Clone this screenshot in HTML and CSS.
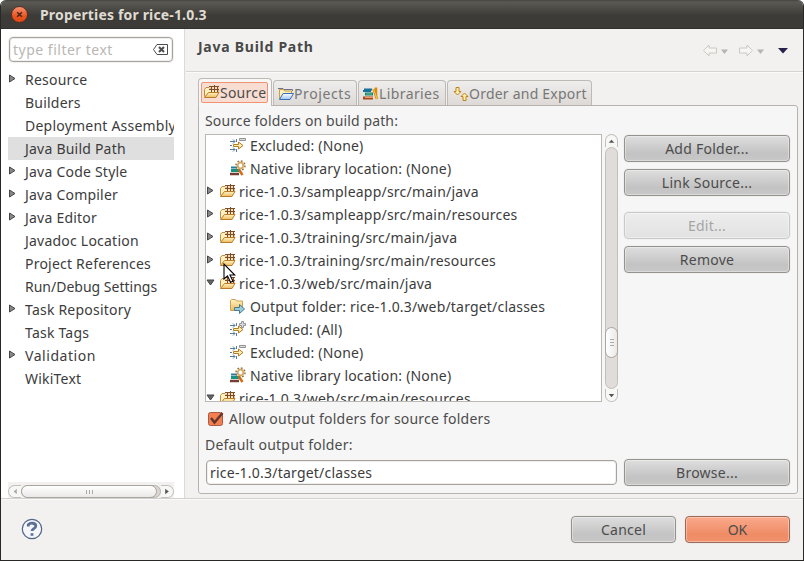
FILE: index.html
```html
<!DOCTYPE html>
<html lang="en">
<head>
<meta charset="utf-8">
<title>Properties for rice-1.0.3</title>
<link rel="stylesheet" href="styles.css">
</head>
<body>
<svg class="defs" width="0" height="0" aria-hidden="true">
  <defs>
    <linearGradient id="gold" x1="0" y1="0" x2="0" y2="1"><stop offset="0" stop-color="#fff3c4"/><stop offset="1" stop-color="#eebb5c"/></linearGradient>
    <linearGradient id="blue" x1="0" y1="0" x2="0" y2="1"><stop offset="0" stop-color="#fff"/><stop offset="1" stop-color="#9cc6f4"/></linearGradient>
  </defs>
  <symbol id="package" viewBox="0 0 16 16">
    <path d="M.5 12.500V5.500L2 3.500h3l1 1h8v4" fill="#fff0bd" stroke="#c08c42"/>
    <path d="M6.500 2.500h7v5h-7z" fill="#f6dfb8"/>
    <path d="M5 2.500h10M5 5.500h10M7.500 2v6M10.500 1v7M13.500 2v6" fill="none" stroke="#7d4d2a"/>
    <path d="M.5 13.500 4.500 8.500h10.500l-3 5z" fill="url(#gold)" stroke="#b87d2c"/>
  </symbol>
  <symbol id="project" viewBox="0 0 16 16">
    <path d="M1.500 13V3.500h4l1 1.500h7v3" fill="#fff0bd" stroke="#c8a040"/>
    <path d="M0 2.500h5l1 1h8.500V5" fill="none" stroke="#6f7189"/>
    <path d="M1.500 13.500 5 7.500h10.500l-3.500 6z" fill="url(#blue)" stroke="#3c6eb4"/>
  </symbol>
  <symbol id="library" viewBox="0 0 16 16">
    <path d="M1 3.500h8M0 5h8" stroke="#16709c" stroke-width="2"/>
    <path d="M2 8h8" stroke="#188268" stroke-width="3"/><path d="M3 8h6" stroke="#67c09d"/>
    <path d="M0 12h10" stroke="#a9451e" stroke-width="3"/><path d="M2 11.500h8" stroke="#e6a05f"/>
    <path d="m10.500 3 3.500 10M13 1.500V10" stroke="#da8a08" stroke-width="2.500"/><path d="m10.500 3 3.500 10" stroke="#ffc755"/>
  </symbol>
  <symbol id="order" viewBox="0 0 16 16">
    <path d="M3 1.500h3v4h2L4.500 9 1 5.500h2z" fill="#fff1ad" stroke="#bd821b"/>
    <path d="M10 14.500h3v-4h2L11.500 7 8 10.500h2z" fill="#fff1ad" stroke="#bd821b"/>
  </symbol>
  <symbol id="output" viewBox="0 0 16 16">
    <path d="M.5 12.500v-10l1-1h4l1 1.500h6v9z" fill="url(#gold)" stroke="#d0a14f"/>
    <path d="M4.500 9.500h5v-3l5 4.500-5 4.500v-3h-5z" fill="#9dcbd5" stroke="#477b94"/>
  </symbol>
  <symbol id="filter" viewBox="0 0 16 16">
    <path d="M0 4.500h5M3 2.500l2 2-2 2M0 8.500h2M0 12.500h5M3 10.500l2 2-2 2M6.500 2v3M6.500 12v3" fill="none" stroke="#5a7c9b"/>
    <path d="M3.500 7.500h5V5l4.500 3.500L8.500 12V9.500h-5z" fill="#fff0b1" stroke="#b57b24"/>
  </symbol>
  <symbol id="included" viewBox="0 0 16 16">
    <use href="#filter"/><path d="M9.500 2.500h2v-2h2v2h2v2h-2v2h-2v-2h-2z" fill="#ddd" stroke="#929292"/>
  </symbol>
  <symbol id="excluded" viewBox="0 0 16 16">
    <use href="#filter"/><path d="M9.500 1.500h6v2h-6z" fill="#ddd" stroke="#929292"/>
  </symbol>
  <symbol id="native" viewBox="0 0 16 16">
    <path d="M1 7.500h6" stroke="#247d9b" stroke-width="2"/><path d="M1 10.500h8" stroke="#1a9080" stroke-width="3"/><path d="M0 14h9" stroke="#773d32" stroke-width="2.500"/>
    <path d="m8.500 9 4 6" stroke="#d76b15" stroke-width="2.500"/>
    <circle cx="10.500" cy="5.500" r="4.500" fill="none" stroke="#96733e" stroke-width="1.500" stroke-dasharray="1.800 1.700"/>
    <circle cx="10.500" cy="5.500" r="2.800" fill="#fff" stroke="#d3ab69" stroke-width="1.800"/>
  </symbol>
  <symbol id="closed" viewBox="0 0 7 9"><path d="M.5 1v7L6 4.500z" fill="#888" stroke="#444"/></symbol>
  <symbol id="open" viewBox="0 0 9 7"><path d="M1 1h7L4.500 6z" fill="#666" stroke="#444"/></symbol>
</svg>
<div class="window">
  <header class="titlebar">
    <span class="close"><svg viewBox="0 0 16 16"><path d="m5.500 5.500 5 5m0-5-5 5" stroke="#43221a" stroke-width="1.500"/></svg></span>
    <h1>Properties for rice-1.0.3</h1>
  </header>
  <div class="content">
    <aside class="sidebar">
      <div class="search"><span>type filter text</span>
        <svg width="15" height="11" viewBox="0 0 15 11"><path d="M4 .5h10.500v10H4L.5 5.500z" fill="#fff" stroke="#4d4d4d"/><path d="m6 3 5 5m0-5L6 8" stroke="#4d4d4d" stroke-width="2"/></svg>
      </div>
      <ul class="nav">
        <li><svg class="tw"><use href="#closed"/></svg><span>Resource</span></li>
        <li><span>Builders</span></li>
        <li><span>Deployment Assembly</span></li>
        <li class="selected"><span>Java Build Path</span></li>
        <li><svg class="tw"><use href="#closed"/></svg><span>Java Code Style</span></li>
        <li><svg class="tw"><use href="#closed"/></svg><span>Java Compiler</span></li>
        <li><svg class="tw"><use href="#closed"/></svg><span>Java Editor</span></li>
        <li><span>Javadoc Location</span></li>
        <li><span>Project References</span></li>
        <li class="tight"><span>Run/Debug Settings</span></li>
        <li><svg class="tw"><use href="#closed"/></svg><span>Task Repository</span></li>
        <li><span>Task Tags</span></li>
        <li class="loose"><svg class="tw"><use href="#closed"/></svg><span>Validation</span></li>
        <li><span>WikiText</span></li>
      </ul>
      <div class="hscroll">
        <svg class="step" viewBox="0 0 12 12"><path d="M8 3v6L4.500 6z" fill="#aaa"/></svg>
        <div class="htrough"><div class="hthumb"><i></i><i></i><i></i></div></div>
        <svg class="step" viewBox="0 0 12 12"><path d="M4 3v6l4-3z" fill="#555"/></svg>
      </div>
    </aside>
    <main class="page">
      <div class="pagehead">
        <h2>Java Build Path</h2>
        <svg class="history" width="88" height="14" viewBox="0 0 88 14">
          <path d="M.5 6.500 6 1v3h7.500v5H6v3z" fill="#f6f6f2" stroke="#c9c8c4"/><path d="M18 5.500h7L21.500 10z" fill="#b5b4b0"/>
          <path d="M49.500 6.500 44 1v3h-7.500v5H44v3z" fill="#f6f6f2" stroke="#c9c8c4"/><path d="M54 5.500h7L57.500 10z" fill="#b5b4b0"/>
          <path d="M75 4h10l-5 5.500z" fill="#252147"/>
        </svg>
      </div>
      <div class="tabs">
        <div class="tab active"><div class="focus"><svg class="ic"><use href="#package"/></svg><span>Source</span></div></div>
        <div class="tab projects"><svg class="ic"><use href="#project"/></svg><span>Projects</span></div>
        <div class="tab libraries"><svg class="ic"><use href="#library"/></svg><span>Libraries</span></div>
        <div class="tab export"><svg class="ic"><use href="#order"/></svg><span>Order and Export</span></div>
      </div>
      <section class="panel">
        <label class="caption">Source folders on build path:</label>
        <div class="columns">
          <ul class="tree">
            <li class="child"><svg class="ic"><use href="#excluded"/></svg><span>Excluded: (None)</span></li>
            <li class="child"><svg class="ic"><use href="#native"/></svg><span>Native library location: (None)</span></li>
            <li><svg class="tw"><use href="#closed"/></svg><svg class="ic"><use href="#package"/></svg><span>rice-1.0.3/sampleapp/src/main/java</span></li>
            <li><svg class="tw"><use href="#closed"/></svg><svg class="ic"><use href="#package"/></svg><span>rice-1.0.3/sampleapp/src/main/resources</span></li>
            <li><svg class="tw"><use href="#closed"/></svg><svg class="ic"><use href="#package"/></svg><span>rice-1.0.3/training/src/main/java</span></li>
            <li><svg class="tw"><use href="#closed"/></svg><svg class="ic"><use href="#package"/></svg><span>rice-1.0.3/training/src/main/resources</span></li>
            <li><svg class="tw"><use href="#open"/></svg><svg class="ic"><use href="#package"/></svg><span>rice-1.0.3/web/src/main/java</span></li>
            <li class="child"><svg class="ic"><use href="#output"/></svg><span>Output folder: rice-1.0.3/web/target/classes</span></li>
            <li class="child"><svg class="ic"><use href="#included"/></svg><span>Included: (All)</span></li>
            <li class="child"><svg class="ic"><use href="#excluded"/></svg><span>Excluded: (None)</span></li>
            <li class="child"><svg class="ic"><use href="#native"/></svg><span>Native library location: (None)</span></li>
            <li><svg class="tw"><use href="#open"/></svg><svg class="ic"><use href="#package"/></svg><span>rice-1.0.3/web/src/main/resources</span></li>
          </ul>
          <div class="vscroll">
            <svg class="step" viewBox="0 0 12 12"><path d="M3 8h6L6 4.500z" fill="#555"/></svg>
            <div class="vtrough"><div class="vthumb"><i></i><i></i><i></i></div></div>
            <svg class="step" viewBox="0 0 12 12"><path d="M3 5h6L6 8.500z" fill="#555"/></svg>
          </div>
          <div class="actions">
            <button>Add Folder...</button>
            <button>Link Source...</button>
            <button class="gap" disabled>Edit...</button>
            <button>Remove</button>
          </div>
        </div>
        <label class="check"><svg width="17" height="17" viewBox="0 0 17 17"><rect x="1.500" y="2.500" width="14" height="13" rx="2" fill="#f47e50" stroke="#a85b41"/><path d="m4 8 3.500 4.500L15.500 3" fill="none" stroke="#65362b" stroke-width="2.500"/></svg><span>Allow output folders for source folders</span></label>
        <label class="caption deflabel">Default output folder:</label>
        <div class="outrow"><div class="field">rice-1.0.3/target/classes</div><button>Browse...</button></div>
      </section>
    </main>
  </div>
  <footer>
    <svg class="help" width="22" height="22" viewBox="0 0 22 22"><circle cx="11" cy="11" r="9.700" fill="#f4f6fa" stroke="#52658a" stroke-width="1.200"/><path d="M7.300 8.500V6.700c2-2.300 7.500-2 7.500 1.300 0 2.700-3.800 2.500-3.800 5M11 15.300v2.500" fill="none" stroke="#5b6f96" stroke-width="2.800"/></svg>
    <button>Cancel</button><button class="primary">OK</button>
  </footer>
  <svg class="cursor" width="13" height="21" viewBox="0 0 13 21"><path d="M1 1v15l3.500-3.200 3 6.500 2.500-1.100-3-6.200h4.800z" fill="#fff" stroke="#000" stroke-width="1.100"/></svg>
</div>
</body>
</html>
```
FILE: styles.css
```css
* { box-sizing: border-box; }
body { margin: 0; background: #fff; color: #3c3c3c; font: 14px/23px "Noto Sans", sans-serif; letter-spacing: .22px; }
h1, h2, ul { margin: 0; padding: 0; }
ul { list-style: none; }
svg { flex: none; display: block; }
.defs { position: absolute; }
span, label, h1, h2 { white-space: nowrap; }
.window { position: relative; width: 804px; height: 561px; display: flex; flex-direction: column; background: #f2f1f0; border: 1px solid #292826; border-top: 0; border-radius: 6px 6px 0 0; overflow: hidden; }
.titlebar { height: 29px; display: flex; align-items: center; padding: 1px 0 0 10px; background: linear-gradient(#45443f, #5a5953 2px, #3c3b37 55%, #3c3b37); border-bottom: 1px solid #31302d; }
.close { width: 17px; height: 17px; margin-right: 12px; border-radius: 50%; background: linear-gradient(#f79271, #eb551f 60%, #dd4814); border: 1px solid #5a3024; }
.titlebar h1 { font-size: 14px; color: #dfdbd2; letter-spacing: .16px; }
.content { height: 469px; display: flex; }
.sidebar { width: 184px; padding: 8px 0 0 7px; background: #fff; border-right: 1px solid #dcdad8; display: flex; flex-direction: column; }
.search { width: 164px; height: 25px; margin-left: 1px; padding: 0 4px 0 3px; display: flex; align-items: center; justify-content: space-between; border: 1px solid #a7a29c; border-radius: 4px; box-shadow: inset 0 0 0 1px #eee, 0 0 0 1px #f3f2f1; color: #b9b7b4; letter-spacing: .5px; }
.nav { width: 166px; height: 415px; padding-top: 6px; overflow: hidden; }
.nav li { height: 23px; display: flex; align-items: center; padding-left: 17px; }
.nav .tw { width: 7px; height: 9px; margin: -2px 9px 0 -16px; }
.nav .selected { background: #dfdfdf; }
.nav .tight { letter-spacing: 0; }
.nav .loose { letter-spacing: .55px; }
.hscroll { flex: none; width: 166px; height: 16px; padding-top: 3px; margin-top: auto; background: #f2f1f0; display: flex; }
.hscroll, .vscroll { overflow: hidden; }
.hscroll .step { width: 13px; height: 13px; border: 1px solid #c3bfba; border-right: 0; border-radius: 7px 0 0 7px; background: #f7f7f6; }
.hscroll .step:last-child { border: 1px solid #c3bfba; border-left: 0; border-radius: 0 7px 7px 0; }
.htrough { flex: 1; height: 13px; background: #d9d6d3; border: 1px solid #b9b4af; border-radius: 7px; }
.hthumb { width: 136px; height: 13px; margin: -1px; display: flex; gap: 2px; justify-content: center; align-items: center; border: 1px solid #aaa59f; border-radius: 7px; background: linear-gradient(#fff, #ebe9e8); }
.hthumb i { width: 1px; height: 4px; background: #aaa; }
.page { flex: 1; min-width: 0; padding-left: 1px; }
.pagehead { height: 43px; display: flex; justify-content: space-between; padding: 6px 12px 0 12px; border-bottom: 1px solid #d6d4d2; box-shadow: 0 1px #fafafa; }
.pagehead h2 { font-size: 14px; line-height: 23px; color: #484848; letter-spacing: .74px; }
.history { margin-top: 9px; }
.tabs { display: flex; align-items: flex-end; height: 33px; padding-left: 12px; gap: 1px; }
.tab { height: 25px; display: flex; align-items: center; padding: 1px 0 0 4px; border: 1px solid #bdbab6; border-bottom: 0; border-radius: 4px 4px 0 0; background: linear-gradient(#efeeed, #ddd9d6); color: #777; }
.ic { width: 16px; height: 16px; }
.tab.active { position: relative; z-index: 1; width: 74px; height: 28px; margin-bottom: -1px; padding: 2px; background: #f7f7f7; color: #4c4c4c; }
.focus { width: 67px; height: 21px; display: flex; align-items: center; padding-left: 2px; border: 1px solid #f19370; border-radius: 2px; background: #f8ddd3; }
.focus .ic { margin-top: -2px; }
.projects { width: 84px; letter-spacing: .6px; }
.libraries { width: 88px; letter-spacing: .4px; }
.export { width: 145px; padding-left: 5px; }
.panel { width: 600px; height: 389px; margin-left: 12px; padding: 0 7px 0 6px; border: 1px solid #b6b3af; border-radius: 0 3px 3px 3px; background: #f6f6f6; }
.caption { display: block; height: 28px; padding-top: 3px; color: #4c4c4c; letter-spacing: .12px; }
.columns { display: flex; height: 268px; }
.tree { width: 397px; overflow: hidden; background: #fff; border: 1px solid #bbb8b4; }
.tree li { height: 23px; display: flex; align-items: center; position: relative; top: -1px; }
.tree .tw { width: 9px; height: 9px; margin: -2px 5px 0 0; }
.tree .ic { margin: -1px 3px 0 0; }
.tree .child { padding-left: 24px; letter-spacing: .19px; }
.tree .child .ic { margin-right: 4px; }
.vscroll { width: 13px; margin-left: 3px; display: flex; flex-direction: column; }
.vscroll .step { width: 13px; height: 13px; border: 1px solid #c3bfba; border-bottom: 0; border-radius: 7px 7px 0 0; background: #f7f7f6; }
.vscroll .step:last-child { border: 1px solid #c3bfba; border-top: 0; border-radius: 0 0 7px 7px; }
.vtrough { flex: 1; background: #dfdcda; border: 1px solid #c2beba; border-radius: 7px; padding-top: 179px; }
.vthumb { width: 13px; height: 31px; margin-left: -1px; display: flex; flex-direction: column; gap: 2px; align-items: center; justify-content: center; border: 1px solid #aaa59f; border-radius: 7px; background: linear-gradient(90deg, #fff, #ebe9e8); }
.vthumb i { width: 4px; height: 1px; background: #aaa; }
.actions { width: 166px; margin: 1px 0 0 6px; display: flex; flex-direction: column; gap: 7px; }
button { height: 27px; padding: 0; color: #4c4c4c; font: 14px/24px "Noto Sans", sans-serif; letter-spacing: .25px; border: 1px solid #96938f; border-radius: 4px; background: linear-gradient(#dedede, #c3c3c3 70%, #c8c8c8); box-shadow: inset 0 0 0 1px rgba(255,255,255,.35), 0 0 0 1px rgba(0,0,0,.025); }
button:disabled { color: #a5a5a5; border-color: #c9c9c9; background: linear-gradient(#ededed, #e2e2e2); }
.gap { margin-top: 9px; }
.check { height: 34px; display: flex; align-items: center; gap: 5px; padding: 0 0 1px 2px; color: #4c4c4c; }
.deflabel { height: 23px; padding: 0; margin-top: -3px; letter-spacing: .22px; }
.outrow { display: flex; align-items: center; padding: 3px 0 0 1px; }
.outrow button { width: 166px; margin-left: 7px; }
.field { width: 411px; height: 25px; padding-left: 3px; border: 1px solid #a7a29c; border-radius: 4px; background: #fff; box-shadow: inset 0 0 0 1px #eee; }
footer { height: 62px; display: flex; align-items: center; padding: 0 13px 0 20px; gap: 9px; border-top: 1px solid #d3d1cf; box-shadow: inset 0 1px #fafafa; }
footer button { width: 105px; }
.help { margin: -1px auto 0 0; }
footer .primary { border-color: #9c6956; background: linear-gradient(#faa98b, #ef8c66 70%, #f0916c); letter-spacing: 0; }
.cursor { position: absolute; left: 222px; top: 263px; }
```
